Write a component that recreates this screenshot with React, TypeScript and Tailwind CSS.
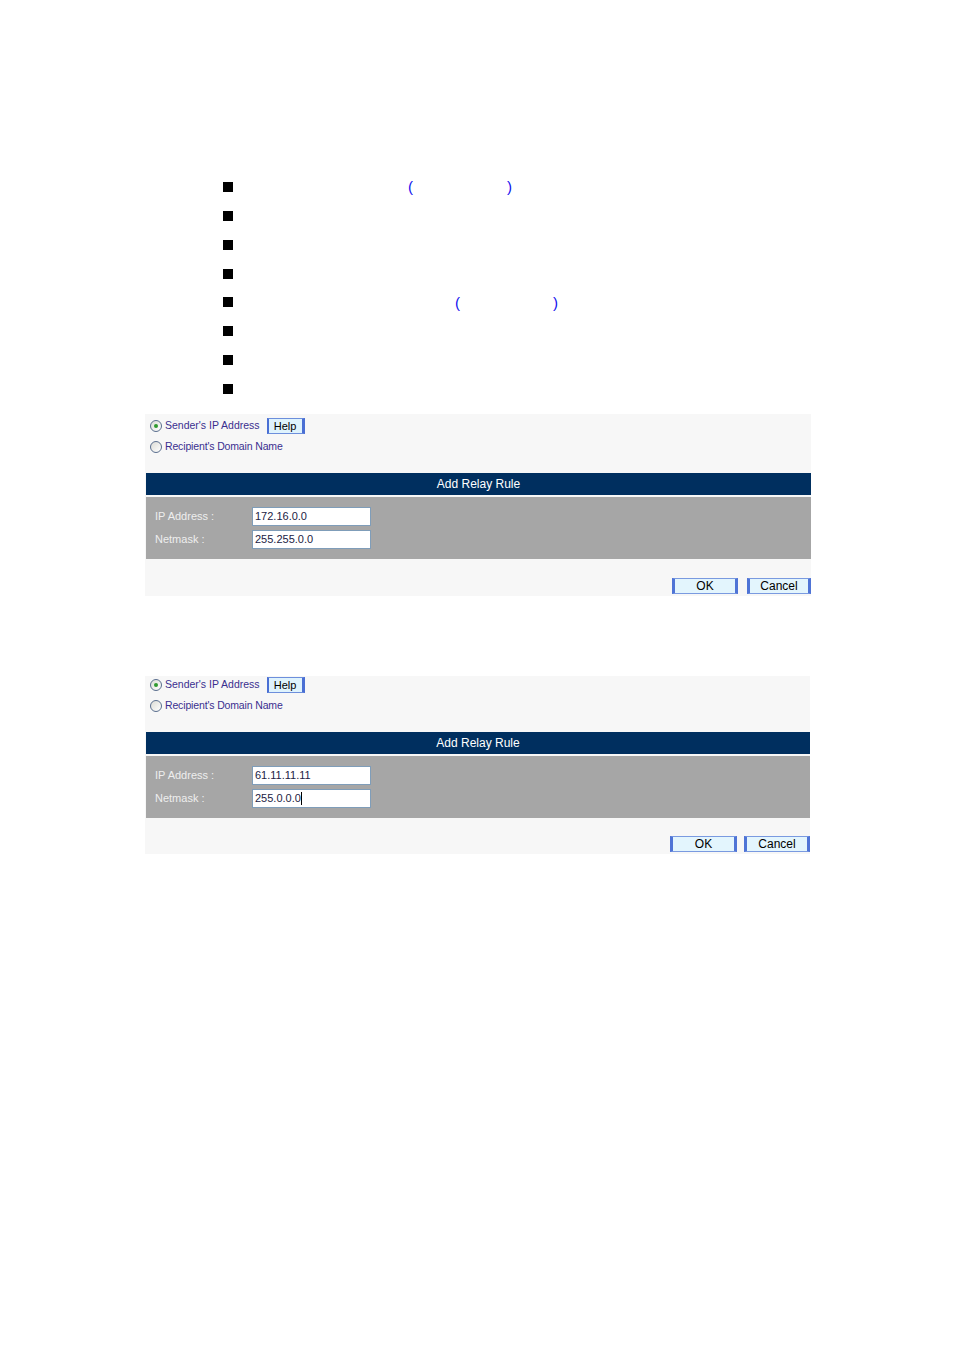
import React from "react";

const bullets = [0, 1, 2, 3, 4, 5, 6, 7];

const Radio = ({ checked }: { checked?: boolean }) => (
  <span className="relative inline-flex w-[12px] h-[12px] rounded-full border border-[#5a6e8e] bg-gradient-to-br from-[#dcdcd6] to-white items-center justify-center shrink-0">
    {checked && <span className="w-[4px] h-[4px] rounded-full bg-[#2f9a2f]" />}
  </span>
);

const XpButton = ({ label, w }: { label: string; w: string }) => (
  <button
    className={`${w} h-[16px] flex items-center justify-center bg-[#e3f5fd] border border-[#7a9ae0] border-l-[3px] border-r-[3px] border-l-[#4f74d6] border-r-[#4f74d6] text-[12px] leading-none text-black font-['Liberation_Sans',Arial,sans-serif]`}
  >
    {label}
  </button>
);

type PanelProps = {
  topH: string;
  radioPt: string;
  ip: string;
  mask: string;
  caret?: boolean;
  bottomH: string;
  bottomPt: string;
  width: string;
  okW: string;
  cancelW: string;
  gap: string;
};

const Panel = (p: PanelProps) => (
  <div className={`${p.width} ml-[145px] bg-[#f7f7f7] font-['Liberation_Sans',Arial,sans-serif]`}>
    <div className={`${p.topH} ${p.radioPt} pl-[5px] flex flex-col`}>
      <div className="flex items-center h-[18px]">
        <Radio checked />
        <span className="ml-[3px] text-[10.5px] text-[#3a2f8f]">Sender's IP Address</span>
        <button className="ml-[7px] w-[38px] h-[16px] flex items-center justify-center bg-[#dff3fd] border border-[#6d8fdc] border-l-[2px] border-r-[3px] border-l-[#4a6fd4] border-r-[#4a6fd4] text-[11px] leading-none text-black">
          Help
        </button>
      </div>
      <div className="flex items-center h-[20px] mt-[2px]">
        <Radio />
        <span className="ml-[3px] text-[10.5px] tracking-[-0.15px] text-[#3a2f8f]">Recipient's Domain Name</span>
      </div>
    </div>
    <div className="ml-[1px] h-[22px] bg-[#002f5f] flex items-center justify-center text-white text-[12px]">
      Add Relay Rule
    </div>
    <div className="ml-[1px] mt-[2px] h-[62px] bg-[#a6a6a6] pt-[10px] pl-[9px] flex flex-col gap-[4px]">
      <div className="flex items-center h-[19px]">
        <span className="w-[97px] text-[11px] text-[#eeeeee]">IP Address :</span>
        <div className="w-[119px] h-[19px] bg-white border border-[#7f9db9] flex items-center pl-[2px] text-[11px] text-[#222244]">
          {p.ip}
        </div>
      </div>
      <div className="flex items-center h-[19px]">
        <span className="w-[97px] text-[11px] text-[#eeeeee]">Netmask :</span>
        <div className="w-[119px] h-[19px] bg-white border border-[#7f9db9] flex items-center pl-[2px] text-[11px] text-[#222244]">
          {p.mask}
          {p.caret && <span className="w-[1px] h-[13px] bg-black" />}
        </div>
      </div>
    </div>
    <div className={`${p.bottomH} ${p.bottomPt} flex justify-end ${p.gap}`}>
      <XpButton label="OK" w={p.okW} />
      <XpButton label="Cancel" w={p.cancelW} />
    </div>
  </div>
);

export default function App() {
  return (
    <div className="w-[954px] h-[1350px] bg-white">
      <div className="h-[414px] pt-[172.5px] flex flex-col">
        {bullets.map((i) => (
          <div key={i} className="h-[28.86px] flex items-center pl-[223px]">
            <span className="w-[10px] h-[10px] bg-black" />
            {i === 0 && (
              <>
                <span className="ml-[175px] text-[15px] leading-none text-[#1010ee] font-['Liberation_Sans',Arial,sans-serif]">(</span>
                <span className="ml-[94px] text-[15px] leading-none text-[#1010ee] font-['Liberation_Sans',Arial,sans-serif]">)</span>
              </>
            )}
            {i === 4 && (
              <>
                <span className="ml-[222px] text-[15px] leading-none text-[#1010ee] font-['Liberation_Sans',Arial,sans-serif]">(</span>
                <span className="ml-[93px] text-[15px] leading-none text-[#1010ee] font-['Liberation_Sans',Arial,sans-serif]">)</span>
              </>
            )}
          </div>
        ))}
      </div>
      <Panel
        width="w-[666px]"
        topH="h-[59px]"
        radioPt="pt-[3px]"
        ip="172.16.0.0"
        mask="255.255.0.0"
        bottomH="h-[37px]"
        bottomPt="pt-[19px]"
        okW="w-[66px]"
        cancelW="w-[64px]"
        gap="gap-[9px]"
      />
      <div className="mt-[80px]">
        <Panel
          width="w-[665px]"
          topH="h-[56px]"
          radioPt="pt-[0px]"
          ip="61.11.11.11"
          mask="255.0.0.0"
          caret
          bottomH="h-[36px]"
          bottomPt="pt-[18px]"
          okW="w-[67px]"
          cancelW="w-[66px]"
          gap="gap-[7px]"
        />
      </div>
    </div>
  );
}
